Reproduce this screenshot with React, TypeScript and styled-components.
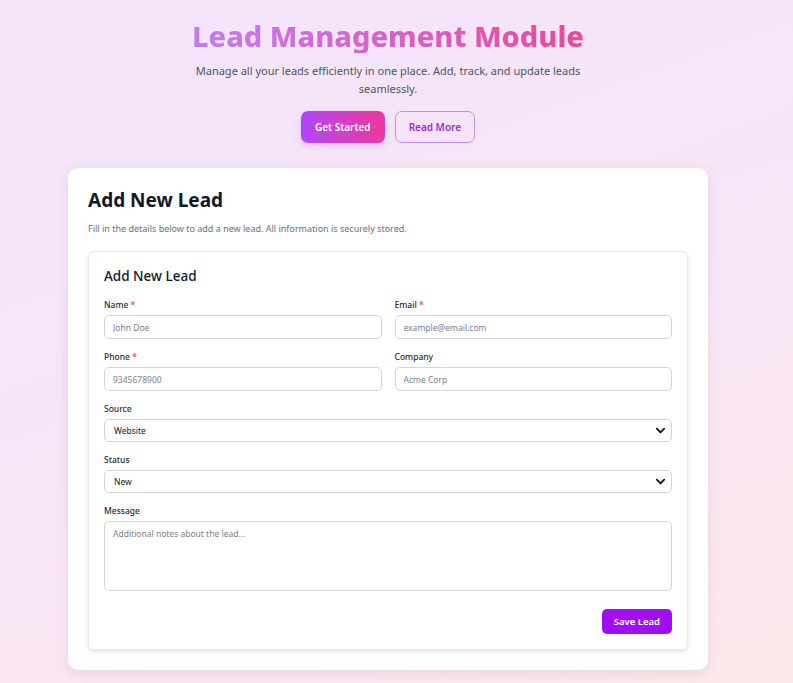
import React from "react";
import styled, { createGlobalStyle } from "styled-components";

const GlobalStyle = createGlobalStyle`
  * { box-sizing: border-box; }
  html, body {
    margin: 0;
    padding: 0;
    font-family: "Noto Sans", "Open Sans", sans-serif;
    color: #1f2937;
  }
`;

const Page = styled.div`
  min-height: 683px;
  background: linear-gradient(160deg, #f4e5fb 0%, #f8e5f6 55%, #fde9ea 100%);
  padding: 18px 17px 13px 0;
`;

const Hero = styled.header`
  display: flex;
  flex-direction: column;
  align-items: center;
  text-align: center;
`;

const Title = styled.h1`
  margin: 0;
  font-size: 29px;
  line-height: 35px;
  font-weight: 800;
  background: linear-gradient(90deg, #c27cf5, #ec4899);
  -webkit-background-clip: text;
  background-clip: text;
  color: transparent;
`;

const Subtitle = styled.p`
  margin: 9px 0 0;
  max-width: 396px;
  font-size: 11px;
  line-height: 18px;
  color: #4b5563;
`;

const Actions = styled.div`
  display: flex;
  gap: 10px;
  margin-top: 13px;
`;

const HeroButton = styled.button<{ $primary?: boolean }>`
  height: 32px;
  padding: 0 13px;
  border-radius: 7px;
  font-family: inherit;
  font-size: 10px;
  font-weight: 600;
  cursor: pointer;
  border: 1px solid ${(p) => (p.$primary ? "transparent" : "#c58cf6")};
  background: ${(p) =>
    p.$primary ? "linear-gradient(90deg, #b146f7, #f0389a)" : "transparent"};
  color: ${(p) => (p.$primary ? "#ffffff" : "#9a2de8")};
  box-shadow: ${(p) => (p.$primary ? "0 3px 6px rgba(168, 85, 247, 0.25)" : "none")};
`;

const Card = styled.section`
  width: 640px;
  margin: 25px auto 0;
  background: #ffffff;
  border-radius: 10px;
  padding: 20px;
  box-shadow: 0 4px 12px rgba(120, 60, 140, 0.12);
`;

const CardTitle = styled.h2`
  margin: 0;
  font-size: 19px;
  line-height: 24px;
  font-weight: 700;
  color: #111827;
`;

const CardDesc = styled.p`
  margin: 10px 0 0;
  font-size: 9px;
  line-height: 14px;
  color: #6b7280;
`;

const FormBox = styled.form`
  margin-top: 15px;
  border: 1px solid #e5e7eb;
  border-radius: 6px;
  padding: 14px 15px 15px;
  box-shadow: 0 2px 4px rgba(0, 0, 0, 0.1);
`;

const FormTitle = styled.h3`
  margin: 0;
  font-size: 13.5px;
  line-height: 20px;
  font-weight: 500;
  color: #111827;
`;

const Grid = styled.div`
  display: grid;
  grid-template-columns: 1fr 1fr;
  column-gap: 13px;
  row-gap: 12px;
  margin-top: 13px;
`;

const Field = styled.div<{ $full?: boolean }>`
  display: flex;
  flex-direction: column;
  gap: 4px;
  grid-column: ${(p) => (p.$full ? "1 / -1" : "auto")};
`;

const Label = styled.label`
  font-size: 8.5px;
  line-height: 12px;
  font-weight: 500;
  color: #1f2937;
`;

const Req = styled.span`
  color: #ef4444;
`;

const Input = styled.input`
  height: 24px;
  padding: 0 8px;
  border: 1px solid #d1d5db;
  border-radius: 5px;
  font-family: inherit;
  font-size: 8.5px;
  color: #111827;
  background: #ffffff;
  &::placeholder { color: #7c818a; }
`;

const SelectWrap = styled.div`
  height: 23px;
  border: 1px solid #d1d5db;
  border-radius: 5px;
  display: flex;
  align-items: center;
  padding: 0 5px 0 9px;
  font-size: 8.5px;
  color: #111827;
  background: #ffffff;
  svg { margin-left: auto; }
`;

const TextArea = styled.textarea`
  height: 70px;
  padding: 6px 8px;
  border: 1px solid #d1d5db;
  border-radius: 5px;
  font-family: inherit;
  font-size: 8.5px;
  resize: none;
  &::placeholder { color: #7c818a; }
`;

const Footer = styled.div`
  display: flex;
  justify-content: flex-end;
  margin-top: 18px;
`;

const SaveButton = styled.button`
  height: 25px;
  padding: 0 12px;
  border: none;
  border-radius: 5px;
  background: #a00ef5;
  color: #ffffff;
  font-family: inherit;
  font-size: 9.5px;
  font-weight: 600;
`;

const Chevron = () => (
  <svg width="11" height="11" viewBox="0 0 24 24" fill="none" stroke="#111" strokeWidth="4" strokeLinecap="round" strokeLinejoin="round">
    <path d="M4 8l8 8 8-8" />
  </svg>
);

export default function App() {
  return (
    <>
      <GlobalStyle />
      <Page>
        <Hero>
          <Title>Lead Management Module</Title>
          <Subtitle>
            Manage all your leads efficiently in one place. Add, track, and update leads seamlessly.
          </Subtitle>
          <Actions>
            <HeroButton $primary>Get Started</HeroButton>
            <HeroButton>Read More</HeroButton>
          </Actions>
        </Hero>

        <Card>
          <CardTitle>Add New Lead</CardTitle>
          <CardDesc>Fill in the details below to add a new lead. All information is securely stored.</CardDesc>

          <FormBox onSubmit={(e) => e.preventDefault()}>
            <FormTitle>Add New Lead</FormTitle>
            <Grid>
              <Field>
                <Label>Name <Req>*</Req></Label>
                <Input placeholder="John Doe" />
              </Field>
              <Field>
                <Label>Email <Req>*</Req></Label>
                <Input placeholder="example@email.com" />
              </Field>
              <Field>
                <Label>Phone <Req>*</Req></Label>
                <Input placeholder="9345678900" />
              </Field>
              <Field>
                <Label>Company</Label>
                <Input placeholder="Acme Corp" />
              </Field>
              <Field $full>
                <Label>Source</Label>
                <SelectWrap>Website<Chevron /></SelectWrap>
              </Field>
              <Field $full>
                <Label>Status</Label>
                <SelectWrap>New<Chevron /></SelectWrap>
              </Field>
              <Field $full>
                <Label>Message</Label>
                <TextArea placeholder="Additional notes about the lead..." />
              </Field>
            </Grid>
            <Footer>
              <SaveButton type="submit">Save Lead</SaveButton>
            </Footer>
          </FormBox>
        </Card>
      </Page>
    </>
  );
}
